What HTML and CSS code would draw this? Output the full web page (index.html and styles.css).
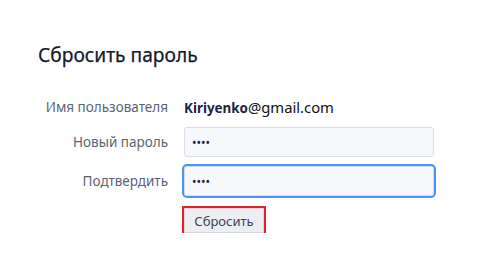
FILE: index.html
```html
<!DOCTYPE html>
<html lang="ru">
<head>
<meta charset="utf-8">
<title>Сбросить пароль</title>
<link rel="stylesheet" href="styles.css">
</head>
<body>
<div class="page">
  <h1 class="title">Сбросить пароль</h1>
  <form class="form">
    <label class="label">Имя пользователя</label>
    <div class="email"><b class="user">Kiriyenko</b>@gmail.com</div>

    <label class="label" for="p1">Новый пароль</label>
    <input class="input" id="p1" type="password" value="1234">

    <label class="label" for="p2">Подтвердить</label>
    <input class="input input-focus" id="p2" type="password" value="1234" autofocus>

    <span></span>
    <div><button class="btn" type="button">Сбросить</button></div>
  </form>
</div>
</body>
</html>
```
FILE: styles.css
```css
html, body {
  margin: 0;
  background: #ffffff;
}
body {
  font-family: "Noto Sans", "Open Sans", sans-serif;
}
.page {
  padding: 41px 0 0 38px;
}
.title {
  margin: 0;
  font-size: 19.2px;
  line-height: 28px;
  font-weight: 400;
  color: #141a2e;
  -webkit-text-stroke: 0.25px #141a2e;
}
.form {
  margin-top: 27px;
  display: grid;
  grid-template-columns: 130px 250px;
  column-gap: 16px;
  row-gap: 9px;
  align-items: center;
}
.label {
  text-align: right;
  font-size: 13.5px;
  color: #5b6477;
  white-space: nowrap;
}
.email {
  height: 22px;
  line-height: 22px;
  font-size: 14.8px;
  color: #111111;
  white-space: nowrap;
}
.user {
  font-size: 13.4px;
  font-weight: 700;
  color: #1b2442;
}
.input {
  box-sizing: border-box;
  width: 250px;
  height: 30px;
  margin: 0;
  padding: 0 7px;
  border: 1px solid #dcdee4;
  border-radius: 3px;
  background: #f7f8fb;
  font-family: "Noto Sans", sans-serif;
  font-size: 12px;
  color: #1b2442;
  outline: none;
}
.input-focus {
  border-color: #d7dbe6;
  outline: 2px solid #4b93f6;
  outline-offset: 0;
  caret-color: #1b2442;
}
.btn {
  margin-top: 3px;
  box-sizing: border-box;
  width: 80px;
  height: 25px;
  padding: 0;
  border: 1px solid #d6d8dd;
  background: #eceef1;
  font-family: "Noto Sans", sans-serif;
  font-size: 13px;
  color: #3c4254;
  outline: 2px solid #e3212b;
  outline-offset: 0;
  border-radius: 0;
}
```
